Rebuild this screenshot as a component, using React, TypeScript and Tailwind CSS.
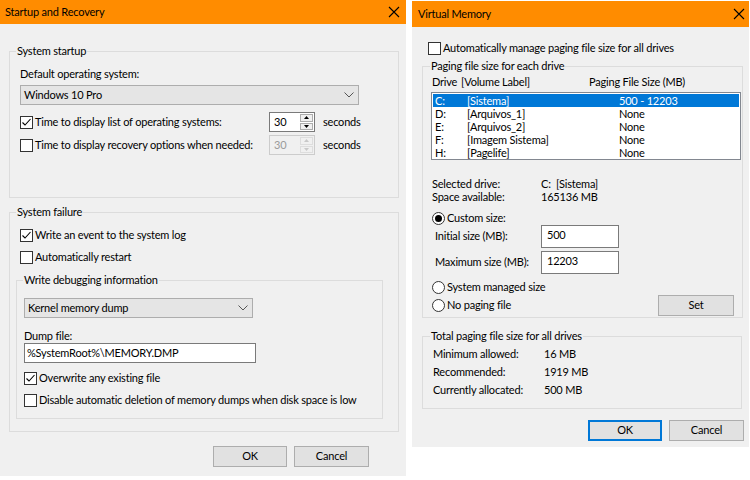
import React from "react";

const font = { fontFamily: 'Lato, "Liberation Sans", sans-serif' };

function CloseX() {
  return (
    <svg width="12" height="12" viewBox="0 0 12 12">
      <path d="M1 1 L11 11 M11 1 L1 11" stroke="#000" strokeWidth="1.1" fill="none" />
    </svg>
  );
}

function Check({ checked }: { checked?: boolean }) {
  return (
    <div className="w-[13px] h-[13px] border border-[#333333] bg-white flex items-center justify-center shrink-0">
      {checked && (
        <svg width="11" height="11" viewBox="0 0 11 11">
          <path d="M1.5 5.5 L4 8 L9.5 2" stroke="#000" strokeWidth="1.1" fill="none" />
        </svg>
      )}
    </div>
  );
}

function Radio({ on }: { on?: boolean }) {
  return (
    <div className="w-[13px] h-[13px] rounded-full border border-[#333333] bg-white flex items-center justify-center shrink-0">
      {on && <div className="w-[7px] h-[7px] rounded-full bg-[#000]" />}
    </div>
  );
}

function Chevron() {
  return (
    <svg width="10" height="6" viewBox="0 0 10 6">
      <path d="M0.5 0.5 L5 5 L9.5 0.5" stroke="#555" strokeWidth="1" fill="none" />
    </svg>
  );
}

function Spin({ value, disabled }: { value: string; disabled?: boolean }) {
  const c = disabled ? "#c8c8c8" : "#000";
  return (
    <div className={`w-[46px] h-[20px] flex border ${disabled ? "border-[#cccccc] bg-[#f0f0f0]" : "border-[#7a7a7a] bg-white"}`}>
      <div className={`flex-1 pl-[4px] leading-[18px] ${disabled ? "text-[#9a9a9a]" : "text-black"}`}>{value}</div>
      <div className="w-[14px] flex flex-col gap-[1px] py-[1px] pr-[1px]">
        <div className={`flex-1 flex items-center justify-center border ${disabled ? "border-[#dddddd]" : "border-[#adadad]"} bg-[#f0f0f0]`}>
          <svg width="5" height="3" viewBox="0 0 5 3"><path d="M0 3 L2.5 0 L5 3 Z" fill={c} /></svg>
        </div>
        <div className={`flex-1 flex items-center justify-center border ${disabled ? "border-[#dddddd]" : "border-[#adadad]"} bg-[#f0f0f0]`}>
          <svg width="5" height="3" viewBox="0 0 5 3"><path d="M0 0 L2.5 3 L5 0 Z" fill={c} /></svg>
        </div>
      </div>
    </div>
  );
}

function Btn({ label, w, primary }: { label: string; w: string; primary?: boolean }) {
  return (
    <div
      className={`${w} h-[21px] flex items-center justify-center bg-[#e1e1e1] border ${primary ? "border-[#0078d7] border-2" : "border-[#adadad]"}`}
    >
      {label}
    </div>
  );
}

export default function App() {
  return (
    <div className="w-[750px] h-[480px] bg-white flex items-start text-[11px] tracking-[-0.2px] text-black whitespace-nowrap" style={font}>
      {/* Left window */}
      <div className="w-[406px] h-[476px] bg-[#f0f0f0] flex flex-col">
        <div className="h-[24px] bg-[#ff8c00] flex items-center justify-between pl-[5px] pr-[6px]">
          <span>Startup and Recovery</span>
          <CloseX />
        </div>
        <div className="px-[9px] flex flex-col">
          <fieldset className="mt-[19px] w-[390px] h-[155px] border border-[#dcdcdc] pl-[10px]">
            <legend className="ml-[-4px] px-[1px] h-[16px] leading-[16px]">System startup</legend>
            <div className="mt-[7px] h-[16px] leading-[16px]">Default operating system:</div>
            <div className="mt-[3px] w-[339px] h-[20px] bg-[#e5e5e5] border border-[#adadad] flex items-center justify-between pl-[3px] pr-[4px]">
              <span>Windows 10 Pro</span>
              <Chevron />
            </div>
            <div className="mt-[7px] h-[20px] flex items-center">
              <div className="w-[249px] flex items-center gap-[2px]">
                <Check checked />
                <span>Time to display list of operating systems:</span>
              </div>
              <Spin value="30" />
              <span className="ml-[8px]">seconds</span>
            </div>
            <div className="mt-[3px] h-[20px] flex items-center">
              <div className="w-[249px] flex items-center gap-[2px]">
                <Check />
                <span>Time to display recovery options when needed:</span>
              </div>
              <Spin value="30" disabled />
              <span className="ml-[8px]">seconds</span>
            </div>
          </fieldset>

          <fieldset className="mt-[6px] w-[390px] h-[228px] border border-[#dcdcdc] pl-[10px]">
            <legend className="ml-[-4px] px-[1px] h-[16px] leading-[16px]">System failure</legend>
            <div className="mt-[7px] h-[16px] flex items-center gap-[2px]">
              <Check checked />
              <span>Write an event to the system log</span>
            </div>
            <div className="mt-[6px] h-[16px] flex items-center gap-[2px]">
              <Check />
              <span>Automatically restart</span>
            </div>
            <fieldset className="mt-[7px] ml-[-4px] w-[367px] h-[147px] border border-[#dcdcdc] pl-[7px]">
              <legend className="ml-[-1px] px-[1px] h-[16px] leading-[16px]">Write debugging information</legend>
              <div className="mt-[10px] w-[229px] h-[20px] bg-[#e5e5e5] border border-[#adadad] flex items-center justify-between pl-[3px] pr-[4px]">
                <span>Kernel memory dump</span>
                <Chevron />
              </div>
              <div className="mt-[11px] h-[14px] leading-[14px]">Dump file:</div>
              <div className="w-[232px] h-[20px] bg-white border border-[#7a7a7a] pl-[2px] leading-[18px]">%SystemRoot%\MEMORY.DMP</div>
              <div className="mt-[7px] h-[16px] flex items-center gap-[2px]">
                <Check checked />
                <span>Overwrite any existing file</span>
              </div>
              <div className="mt-[6px] h-[16px] flex items-center gap-[2px]">
                <Check />
                <span>Disable automatic deletion of memory dumps when disk space is low</span>
              </div>
            </fieldset>
          </fieldset>
        </div>
        <div className="mt-[14px] flex justify-end gap-[7px] pr-[37px]">
          <Btn label="OK" w="w-[74px]" />
          <Btn label="Cancel" w="w-[75px]" />
        </div>
      </div>

      {/* Right window */}
      <div className="ml-[6px] mt-[1px] w-[337px] h-[446px] bg-[#f0f0f0] flex flex-col">
        <div className="h-[26px] bg-[#ff8c00] flex items-center justify-between pl-[6px] pr-[4px]">
          <span>Virtual Memory</span>
          <CloseX />
        </div>
        <div className="mt-[13px] pl-[16px] h-[16px] flex items-center gap-[2px]">
          <Check />
          <span>Automatically manage paging file size for all drives</span>
        </div>
        <fieldset className="mt-[2px] ml-[10px] w-[320px] h-[260px] border border-[#dcdcdc] pl-[9px] pr-[1px]">
          <legend className="ml-[-2px] px-[1px] h-[16px] leading-[16px]">Paging file size for each drive</legend>
          <div className="h-[16px] leading-[16px] flex">
            <span className="w-[29px]">Drive</span>
            <span className="w-[128px]">[Volume Label]</span>
            <span>Paging File Size (MB)</span>
          </div>
          <div className="mt-[2px] ml-[-1px] w-[310px] h-[68px] bg-white border border-[#828790] p-[1px]">
            {[
              ["C:", "[Sistema]", "500 - 12203"],
              ["D:", "[Arquivos_1]", "None"],
              ["E:", "[Arquivos_2]", "None"],
              ["F:", "[Imagem Sistema]", "None"],
              ["H:", "[Pagelife]", "None"],
            ].map((r, i) => (
              <div
                key={i}
                className={`h-[13px] leading-[13px] flex pl-[2px] ${i === 0 ? "bg-[#0078d7] text-white" : ""}`}
              >
                <span className="w-[32px]">{r[0]}</span>
                <span className="w-[152px]">{r[1]}</span>
                <span>{r[2]}</span>
              </div>
            ))}
          </div>
          <div className="mt-[17px] h-[13px] leading-[13px] flex">
            <span className="w-[109px]">Selected drive:</span>
            <span>C:&nbsp;&nbsp;[Sistema]</span>
          </div>
          <div className="h-[13px] leading-[13px] flex">
            <span className="w-[109px]">Space available:</span>
            <span>165136 MB</span>
          </div>
          <div className="mt-[8px] h-[14px] flex items-center gap-[2px]">
            <Radio on />
            <span>Custom size:</span>
          </div>
          <div className="h-[23px] flex items-center">
            <span className="w-[109px] pl-[3px]">Initial size (MB):</span>
            <div className="w-[78px] h-[23px] bg-white border border-[#7a7a7a] pl-[5px] leading-[18px]">500</div>
          </div>
          <div className="mt-[3px] h-[23px] flex items-center">
            <span className="w-[109px] pl-[3px]">Maximum size (MB):</span>
            <div className="w-[78px] h-[23px] bg-white border border-[#7a7a7a] pl-[5px] leading-[18px]">12203</div>
          </div>
          <div className="mt-[6px] h-[14px] flex items-center gap-[2px]">
            <Radio />
            <span>System managed size</span>
          </div>
          <div className="mt-[1px] h-[21px] flex items-center gap-[2px] pr-[7px]">
            <Radio />
            <span>No paging file</span>
            <div className="ml-auto">
              <Btn label="Set" w="w-[76px]" />
            </div>
          </div>
        </fieldset>
        <fieldset className="mt-[10px] ml-[10px] w-[320px] h-[81px] border border-[#dcdcdc] pl-[10px]">
          <legend className="ml-[-3px] px-[1px] h-[16px] leading-[16px]">Total paging file size for all drives</legend>
          {[
            ["Minimum allowed:", "16 MB"],
            ["Recommended:", "1919 MB"],
            ["Currently allocated:", "500 MB"],
          ].map((r, i) => (
            <div key={i} className={`h-[18px] flex items-center ${i === 0 ? "mt-[1px]" : ""}`}>
              <span className="w-[111px]">{r[0]}</span>
              <span>{r[1]}</span>
            </div>
          ))}
        </fieldset>
        <div className="mt-[11px] flex justify-end gap-[7px] pr-[5px]">
          <Btn label="OK" w="w-[74px]" primary />
          <Btn label="Cancel" w="w-[75px]" />
        </div>
      </div>
    </div>
  );
}
